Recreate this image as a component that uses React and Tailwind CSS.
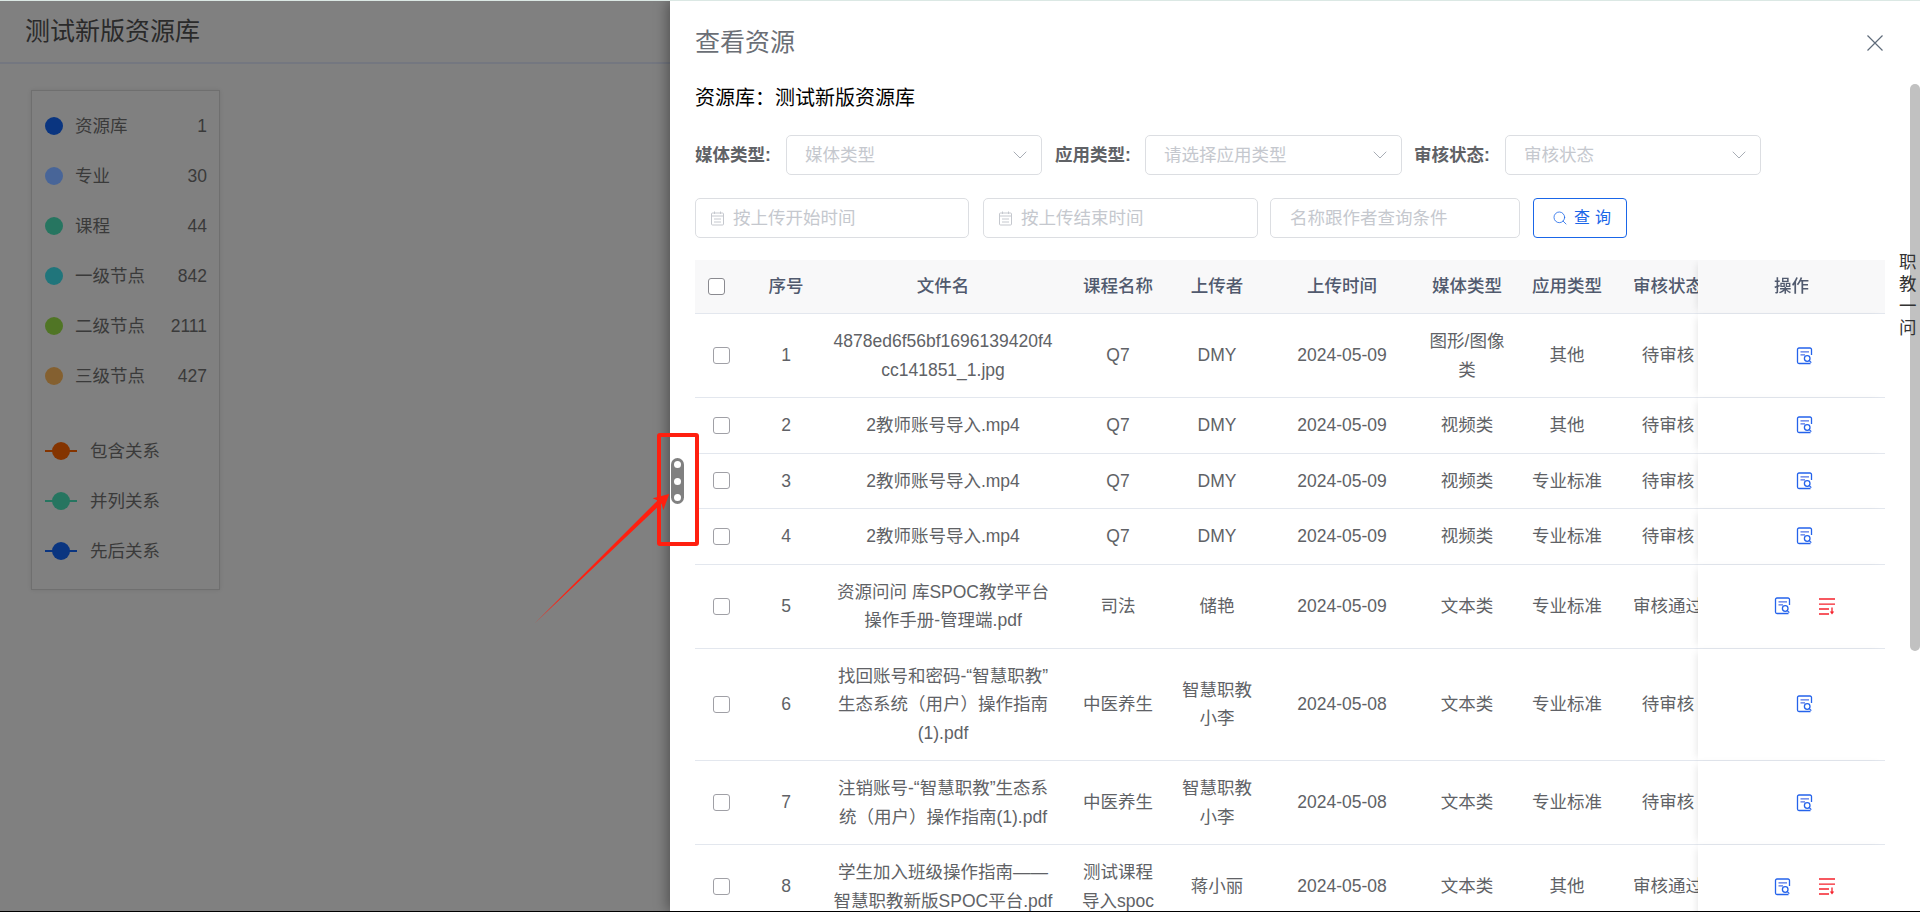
import { ChevronDown, Search } from "lucide-react";

const legend = [
  ["资源库", "1", "bg-[#0a3580]"],
  ["专业", "30", "bg-[#486598]"],
  ["课程", "44", "bg-[#267560]"],
  ["一级节点", "842", "bg-[#20757b]"],
  ["二级节点", "2111", "bg-[#507525]"],
  ["三级节点", "427", "bg-[#846030]"],
];

const relations = [
  ["包含关系", "#843400"],
  ["并列关系", "#267560"],
  ["先后关系", "#0a3580"],
];

const rows = [
  ["1", "4878ed6f56bf1696139420f4\ncc141851_1.jpg", "Q7", "DMY", "2024-05-09", "图形/图像\n类", "其他", "待审核"],
  ["2", "2教师账号导入.mp4", "Q7", "DMY", "2024-05-09", "视频类", "其他", "待审核"],
  ["3", "2教师账号导入.mp4", "Q7", "DMY", "2024-05-09", "视频类", "专业标准", "待审核"],
  ["4", "2教师账号导入.mp4", "Q7", "DMY", "2024-05-09", "视频类", "专业标准", "待审核"],
  ["5", "资源问问 库SPOC教学平台\n操作手册-管理端.pdf", "司法", "储艳", "2024-05-09", "文本类", "专业标准", "审核通过"],
  ["6", "找回账号和密码-“智慧职教”\n生态系统（用户）操作指南\n(1).pdf", "中医养生", "智慧职教\n小李", "2024-05-08", "文本类", "专业标准", "待审核"],
  ["7", "注销账号-“智慧职教”生态系\n统（用户）操作指南(1).pdf", "中医养生", "智慧职教\n小李", "2024-05-08", "文本类", "专业标准", "待审核"],
  ["8", "学生加入班级操作指南——\n智慧职教新版SPOC平台.pdf", "测试课程\n导入spoc", "蒋小丽", "2024-05-08", "文本类", "其他", "审核通过"],
];

const heads = ["序号", "文件名", "课程名称", "上传者", "上传时间", "媒体类型", "应用类型", "审核状态"];

const ViewIcon = () => (
  <svg width="17" height="18" viewBox="0 0 17 18" fill="none" stroke="#2563eb" strokeWidth="1.3">
    <path d="M15.5 8V2.5a1.5 1.5 0 0 0-1.5-1.5H3a1.5 1.5 0 0 0-1.5 1.500v12.500A1.5 1.5 0 0 0 3 16.500h11.500" />
    <path d="M4.500 4.800h8.500M4.500 7.800h4.500" stroke="#4f72e6" />
    <circle cx="11.200" cy="11.500" r="2.800" />
    <path d="M13.300 13.600l2 2" />
  </svg>
);

const RemoveIcon = () => (
  <svg width="16" height="17" viewBox="0 0 16 17" fill="none" stroke="#f5222d" strokeWidth="1.3">
    <path d="M0 1h16M0 6.200h16M0 11h10M0 16h10" />
    <path d="M13 9.500v5" />
    <path d="M10.800 13.500h4.400l-2.200 3z" fill="#f5222d" stroke="none" />
  </svg>
);

const CalendarIcon = () => (
  <svg width="15" height="15" viewBox="0 0 15 15" fill="none" stroke="#c5c8ce" strokeWidth="1">
    <rect x="1.500" y="2" width="12" height="12" rx="1" />
    <path d="M4.500 0.500v2.500M10.500 0.500v2.500M1.500 5h12M4 8h7M4 11h7" />
  </svg>
);

const SelectBox = ({ text, width }) => (
  <div className={`flex h-10 items-center justify-between rounded-[5px] border border-[#dcdee2] pl-[18px] pr-[9px] ${width}`}>
    <span className="text-[#c5c8ce]">{text}</span>
    <ChevronDown size={24} strokeWidth={1} className="text-[#a8adb5]" />
  </div>
);

const DateBox = ({ text, width }) => (
  <div className={`flex h-10 items-center gap-2 rounded-[5px] border border-[#dcdee2] pl-[14px] ${width}`}>
    <CalendarIcon />
    <span className="text-[#c5c8ce]">{text}</span>
  </div>
);

const Label = ({ text, className }) => (
  <span className={`font-bold whitespace-nowrap text-[#606266] ${className}`}>{text}</span>
);

const App = () => {
  return (
    <div className="relative flex h-[912px] w-full flex-col overflow-hidden bg-white font-['Liberation_Sans','Noto_Sans_CJK_SC',sans-serif] text-[17.5px]">
      <div className="h-px bg-[#dbe8e4]"></div>

      <div className="relative min-h-0 flex-1 overflow-hidden bg-[#808080]">
        {/* page behind the drawer, already dimmed by the mask */}
        <div className="flex h-[63px] items-center border-b-2 border-[#747780] pl-[25px] text-[25px] text-[#2a2a2a]">
          测试新版资源库
        </div>
        <div className="ml-[31px] mt-[26px] h-[500px] w-[189px] border border-[#6f6f6f] pb-[14px] pl-[13px] pr-[12px] pt-[10px] text-[#3a3a3a] shadow-[0_0_4px_rgba(0,0,0,0.1)]">
          {legend.map((item) => (
            <div key={item[0]} className="flex h-[50px] items-center">
              <span className={`h-[18px] w-[18px] rounded-full ${item[2]}`}></span>
              <span className="ml-3 flex-1">{item[0]}</span>
              <span>{item[1]}</span>
            </div>
          ))}
          <div className="h-[25px]"></div>
          {relations.map((item) => (
            <div key={item[0]} className="flex h-[50px] items-center gap-[13px]">
              <svg width="32" height="18" viewBox="0 0 32 18">
                <path d="M0 9h32" stroke={item[1]} strokeWidth="2" />
                <circle cx="16" cy="9" r="9" fill={item[1]} />
              </svg>
              <span>{item[0]}</span>
            </div>
          ))}
        </div>

        {/* drawer */}
        <div className="absolute bottom-0 right-0 top-0 w-[1250px] overflow-hidden bg-white pl-[25px] pr-[35px] pt-[27px] shadow-[-3px_0_12px_rgba(0,0,0,0.35)]">
          <div className="flex h-[30px] items-center justify-between">
            <span className="text-[25px] text-[#6b6f76]">查看资源</span>
            <svg width="20" height="20" viewBox="0 0 20 20" fill="none" stroke="#5f6b7a" strokeWidth="1.2">
              <path d="M2.500 2.500l15 15M17.500 2.500l-15 15" />
            </svg>
          </div>

          <div className="mt-7 h-6 text-[20px] leading-6 text-black">资源库：测试新版资源库</div>

          <div className="mt-[25px] flex items-center">
            <Label text="媒体类型:" className="mr-4 w-[75px]" />
            <SelectBox text="媒体类型" width="w-[256px]" />
            <Label text="应用类型:" className="ml-[13px] mr-[15px] w-[75px]" />
            <SelectBox text="请选择应用类型" width="w-[257px]" />
            <Label text="审核状态:" className="ml-3 mr-4 w-[75px]" />
            <SelectBox text="审核状态" width="w-[256px]" />
          </div>

          <div className="mt-[23px] flex items-center">
            <DateBox text="按上传开始时间" width="w-[274px]" />
            <DateBox text="按上传结束时间" width="ml-[14px] w-[275px]" />
            <div className="ml-3 flex h-10 w-[250px] items-center rounded-[5px] border border-[#dcdee2] pl-[19px]">
              <span className="text-[#c5c8ce]">名称跟作者查询条件</span>
            </div>
            <button className="ml-[13px] flex h-10 w-[94px] items-center justify-center gap-1.5 rounded-[4px] border border-[#1a66e8] pl-2 text-[16px] text-[#1a66e8]">
              <Search size={16} strokeWidth={1.2} />
              <span className="tracking-[5px]">查询</span>
            </button>
          </div>

          <div className="mt-[22px] overflow-x-hidden">
            <table className="w-[1210px] table-fixed border-separate border-spacing-0 text-center leading-[28.5px] text-[#606266]">
              <colgroup>
                <col className="w-[59px]" />
                <col className="w-[64px]" />
                <col className="w-[250px]" />
                <col className="w-[100px]" />
                <col className="w-[98px]" />
                <col className="w-[152px]" />
                <col className="w-[98px]" />
                <col className="w-[102px]" />
                <col className="w-[100px]" />
                <col className="w-[187px]" />
              </colgroup>
              <thead>
                <tr className="text-[#515a6e]">
                  <th className="h-[54px] border-b border-[#e3e7ee] bg-[#f8f8f9] pl-[13px] text-left font-medium">
                    <span className="block h-[17px] w-[17px] rounded-[3px] border border-[#8a8a90] bg-white"></span>
                  </th>
                  {heads.map((h) => (
                    <th key={h} className="border-b border-[#e3e7ee] bg-[#f8f8f9] font-medium whitespace-nowrap">{h}</th>
                  ))}
                  <th className="sticky right-0 z-10 border-b border-[#e3e7ee] bg-[#f8f8f9] font-medium shadow-[-4px_0_8px_-4px_rgba(0,0,0,0.12)]">操作</th>
                </tr>
              </thead>
              <tbody>
                {rows.map((row) => (
                  <tr key={row[0]}>
                    <td className="border-b border-[#e3e7ee] py-[13px] pl-[18px]">
                      <span className="block h-[17px] w-[17px] rounded-[3px] border border-[#a0a0a6]"></span>
                    </td>
                    {row.map((cell, i) => (
                      <td key={i} className="border-b border-[#e3e7ee] py-[13px] whitespace-pre-line">{cell}</td>
                    ))}
                    <td className="sticky right-0 z-10 border-b border-[#e3e7ee] bg-white pl-[25px] shadow-[-4px_0_8px_-4px_rgba(0,0,0,0.12)]">
                      <div className="flex items-center justify-center gap-[28px]">
                        <ViewIcon />
                        {row[7] === "审核通过" && <RemoveIcon />}
                      </div>
                    </td>
                  </tr>
                ))}
              </tbody>
            </table>
          </div>
        </div>

        {/* drag handle on the drawer edge */}
        <div className="absolute left-[671px] top-[457px] flex h-[46px] w-[13px] flex-col items-center justify-between rounded-full bg-[#808080] py-[3px]">
          <span className="h-[7px] w-[7px] rounded-full bg-white"></span>
          <span className="h-[7px] w-[7px] rounded-full bg-white"></span>
          <span className="h-[7px] w-[7px] rounded-full bg-white"></span>
        </div>

        {/* scrollbar thumb and side label */}
        <div className="absolute right-0 top-[83px] h-[567px] w-[10px] rounded-[5px] bg-[#c1c1c1]"></div>
        <div className="absolute right-[3px] top-[251px] w-[18px] text-[17.5px] leading-[21.875px] text-[#333]">职教一问</div>

        {/* red annotation */}
        <div className="absolute left-[657px] top-[432px] h-[113px] w-[42px] rounded-[3px] border-4 border-[#ff1f0f]"></div>
        <svg className="absolute left-[530px] top-[485px]" width="145" height="145" viewBox="0 0 145 145">
          <polygon points="5,137 127.500,14.500 122.700,12.300 139.300,8 133.300,24 131.500,17.500" fill="#ff1f0f" />
        </svg>
      </div>

      <div className="h-px bg-black"></div>
    </div>
  );
};

export default App;
